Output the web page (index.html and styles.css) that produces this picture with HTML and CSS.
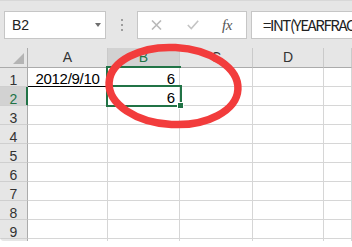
FILE: index.html
```html
<!DOCTYPE html>
<html>
<head>
<meta charset="utf-8">
<link rel="stylesheet" href="styles.css">
</head>
<body>
<div class="window">
  <div class="fbar">
    <div class="namebox"><span class="ref">B2</span><span class="caret"></span></div>
    <div class="grip"><i></i><i></i><i></i></div>
    <div class="btns">
      <svg class="ico-x" width="11" height="10" viewBox="0 0 11 10"><path d="M1 0.5 L10 9.5 M10 0.5 L1 9.5" stroke="#b9b9b9" stroke-width="1.6" fill="none"/></svg>
      <svg class="ico-ok" width="12" height="10" viewBox="0 0 12 10"><path d="M0.8 5 L4.3 8.6 L11.2 0.8" stroke="#c4c4c4" stroke-width="1.6" fill="none"/></svg>
      <span class="fx">fx</span>
    </div>
    <div class="formula">=INT(YEARFRAC(A1,TODAY(),1))</div>
  </div>
  <div class="sheet">
    <div class="grid">
      <div class="corner"><span class="tri"></span></div>
      <div class="ch">A</div><div class="ch sel">B</div><div class="ch">C</div><div class="ch">D</div><div class="ch"></div>

      <div class="rh">1</div><div class="c ctr a1">2012/9/10</div><div class="c num">6</div><div class="c"></div><div class="c"></div><div class="c"></div>
      <div class="rh sel">2</div><div class="c"></div><div class="c num">6</div><div class="c"></div><div class="c"></div><div class="c"></div>
      <div class="rh">3</div><div class="c"></div><div class="c"></div><div class="c"></div><div class="c"></div><div class="c"></div>
      <div class="rh">4</div><div class="c"></div><div class="c"></div><div class="c"></div><div class="c"></div><div class="c"></div>
      <div class="rh">5</div><div class="c"></div><div class="c"></div><div class="c"></div><div class="c"></div><div class="c"></div>
      <div class="rh">6</div><div class="c"></div><div class="c"></div><div class="c"></div><div class="c"></div><div class="c"></div>
      <div class="rh">7</div><div class="c"></div><div class="c"></div><div class="c"></div><div class="c"></div><div class="c"></div>
      <div class="rh">8</div><div class="c"></div><div class="c"></div><div class="c"></div><div class="c"></div><div class="c"></div>
      <div class="rh">9</div><div class="c"></div><div class="c"></div><div class="c"></div><div class="c"></div><div class="c"></div>
      <div class="rh"></div><div class="c"></div><div class="c"></div><div class="c"></div><div class="c"></div><div class="c"></div>
    </div>
    <div class="sel-colline"></div>
    <div class="sel-left"></div>
    <div class="sel-active"></div>
    <div class="fill-handle"></div>
  </div>
  <svg class="pen" width="352" height="247" viewBox="0 0 352 247">
    <ellipse cx="173.5" cy="86" rx="64.5" ry="38.5" transform="rotate(3 173.5 86)" fill="none" stroke="#f23c3c" stroke-width="7.5"/>
  </svg>
</div>
</body>
</html>
```

FILE: styles.css
```css
html, body {
  margin: 0;
  padding: 0;
  background: #ffffff;
}
.window {
  position: relative;
  width: 352px;
  height: 247px;
  overflow: hidden;
  font-family: "Liberation Sans", Arial, sans-serif;
  background: #ffffff;
}
.fbar {
  height: 48px;
  box-sizing: border-box;
  padding: 11px 0 0 4px;
  display: flex;
  align-items: flex-start;
  background: #e6e6e6;
  border-top: 1px solid #d8d8d8;
}
.fbar > * { margin-top: -1px; }
.namebox {
  width: 102px;
  height: 28px;
  box-sizing: border-box;
  border: 1px solid #c6c6c6;
  background: #fff;
  display: flex;
  align-items: center;
  padding-left: 7px;
}
.ref {
  font-size: 14px;
  color: #222;
}
.caret {
  margin-left: auto;
  margin-right: 4px;
  width: 0;
  height: 0;
  border-left: 3.5px solid transparent;
  border-right: 3.5px solid transparent;
  border-top: 4px solid #6e6e6e;
}
.grip {
  width: 31px;
  display: flex;
  flex-direction: column;
  align-items: center;
  padding-top: 8px;
  gap: 3px;
}
.grip i {
  display: block;
  width: 2px;
  height: 2px;
  background: #9d9d9d;
}
.btns {
  width: 110px;
  height: 28px;
  box-sizing: border-box;
  border: 1px solid #c6c6c6;
  background: #fff;
  display: flex;
  align-items: center;
}
.ico-x { margin-left: 13px; }
.ico-ok { margin-left: 25px; }
.fx {
  margin-left: 23px;
  font-family: "Liberation Serif", "Times New Roman", serif;
  font-style: italic;
  font-size: 15px;
  color: #555;
  letter-spacing: -0.5px;
}
.formula {
  margin-left: 4px;
  flex: 1;
  height: 28px;
  box-sizing: border-box;
  border: 1px solid #c6c6c6;
  border-right: none;
  background: #fff;
  padding-left: 11px;
  white-space: nowrap;
  overflow: hidden;
  font-family: "Noto Sans CJK SC", "Liberation Sans", sans-serif;
  font-size: 15px;
  letter-spacing: -1.4px;
  line-height: 26px;
  color: #222;
}
.sheet {
  position: relative;
  height: 193px;
  overflow: hidden;
  border-bottom-left-radius: 4px;
}
.grid {
  display: grid;
  grid-template-columns: 28px 80px 72px 73px 71px 1fr;
  grid-template-rows: 20px repeat(10, 19px);
}
.grid > div {
  box-sizing: border-box;
  white-space: nowrap;
  overflow: hidden;
}
.corner {
  background: #e6e6e6;
  border-right: 1px solid #ababab;
  border-bottom: 1px solid #ababab;
  display: flex;
  justify-content: flex-end;
  align-items: flex-end;
  padding: 0 3px 3px 0;
}
.tri {
  width: 0;
  height: 0;
  border-left: 11px solid transparent;
  border-bottom: 11px solid #b4b4b4;
}
.ch {
  background: #e6e6e6;
  border-right: 1px solid #cacaca;
  border-bottom: 1px solid #ababab;
  text-align: center;
  font-size: 14px;
  line-height: 19px;
  color: #333;
}
.ch.sel {
  background: #d2d2d2;
  color: #217346;
}
.rh {
  background: #e6e6e6;
  border-right: 1px solid #ababab;
  border-bottom: 1px solid #cfcfcf;
  text-align: center;
  font-size: 14px;
  line-height: 18px;
  padding-top: 3px;
  color: #333;
}
.rh.sel {
  background: #d2d2d2;
  color: #217346;
  box-shadow: inset -1px 0 0 #217346;
  border-right-color: #217346;
}
.c {
  border-right: 1px solid #d6d6d6;
  border-bottom: 1px solid #d6d6d6;
  font-size: 15px;
  line-height: 18px;
  padding-top: 2px;
  color: #000;
}
.ctr {
  text-align: center;
  letter-spacing: -0.3px;
}
.num {
  text-align: right;
  padding-right: 4px;
}
.a1 {
  border-right-color: #000;
  border-bottom-color: #000;
}
.sel-colline {
  position: absolute;
  left: 106px;
  top: 18px;
  width: 75px;
  height: 2px;
  background: #217346;
}
.sel-left {
  position: absolute;
  left: 106px;
  top: 18px;
  width: 2px;
  height: 41px;
  background: #217346;
}
.sel-active {
  position: absolute;
  left: 106px;
  top: 37px;
  width: 76px;
  height: 22px;
  box-sizing: border-box;
  border: 2px solid #217346;
}
.fill-handle {
  position: absolute;
  left: 177px;
  top: 54px;
  width: 5px;
  height: 5px;
  background: #217346;
  border: 1px solid #fff;
}
.pen {
  position: absolute;
  left: 0;
  top: 0;
  pointer-events: none;
}
```
